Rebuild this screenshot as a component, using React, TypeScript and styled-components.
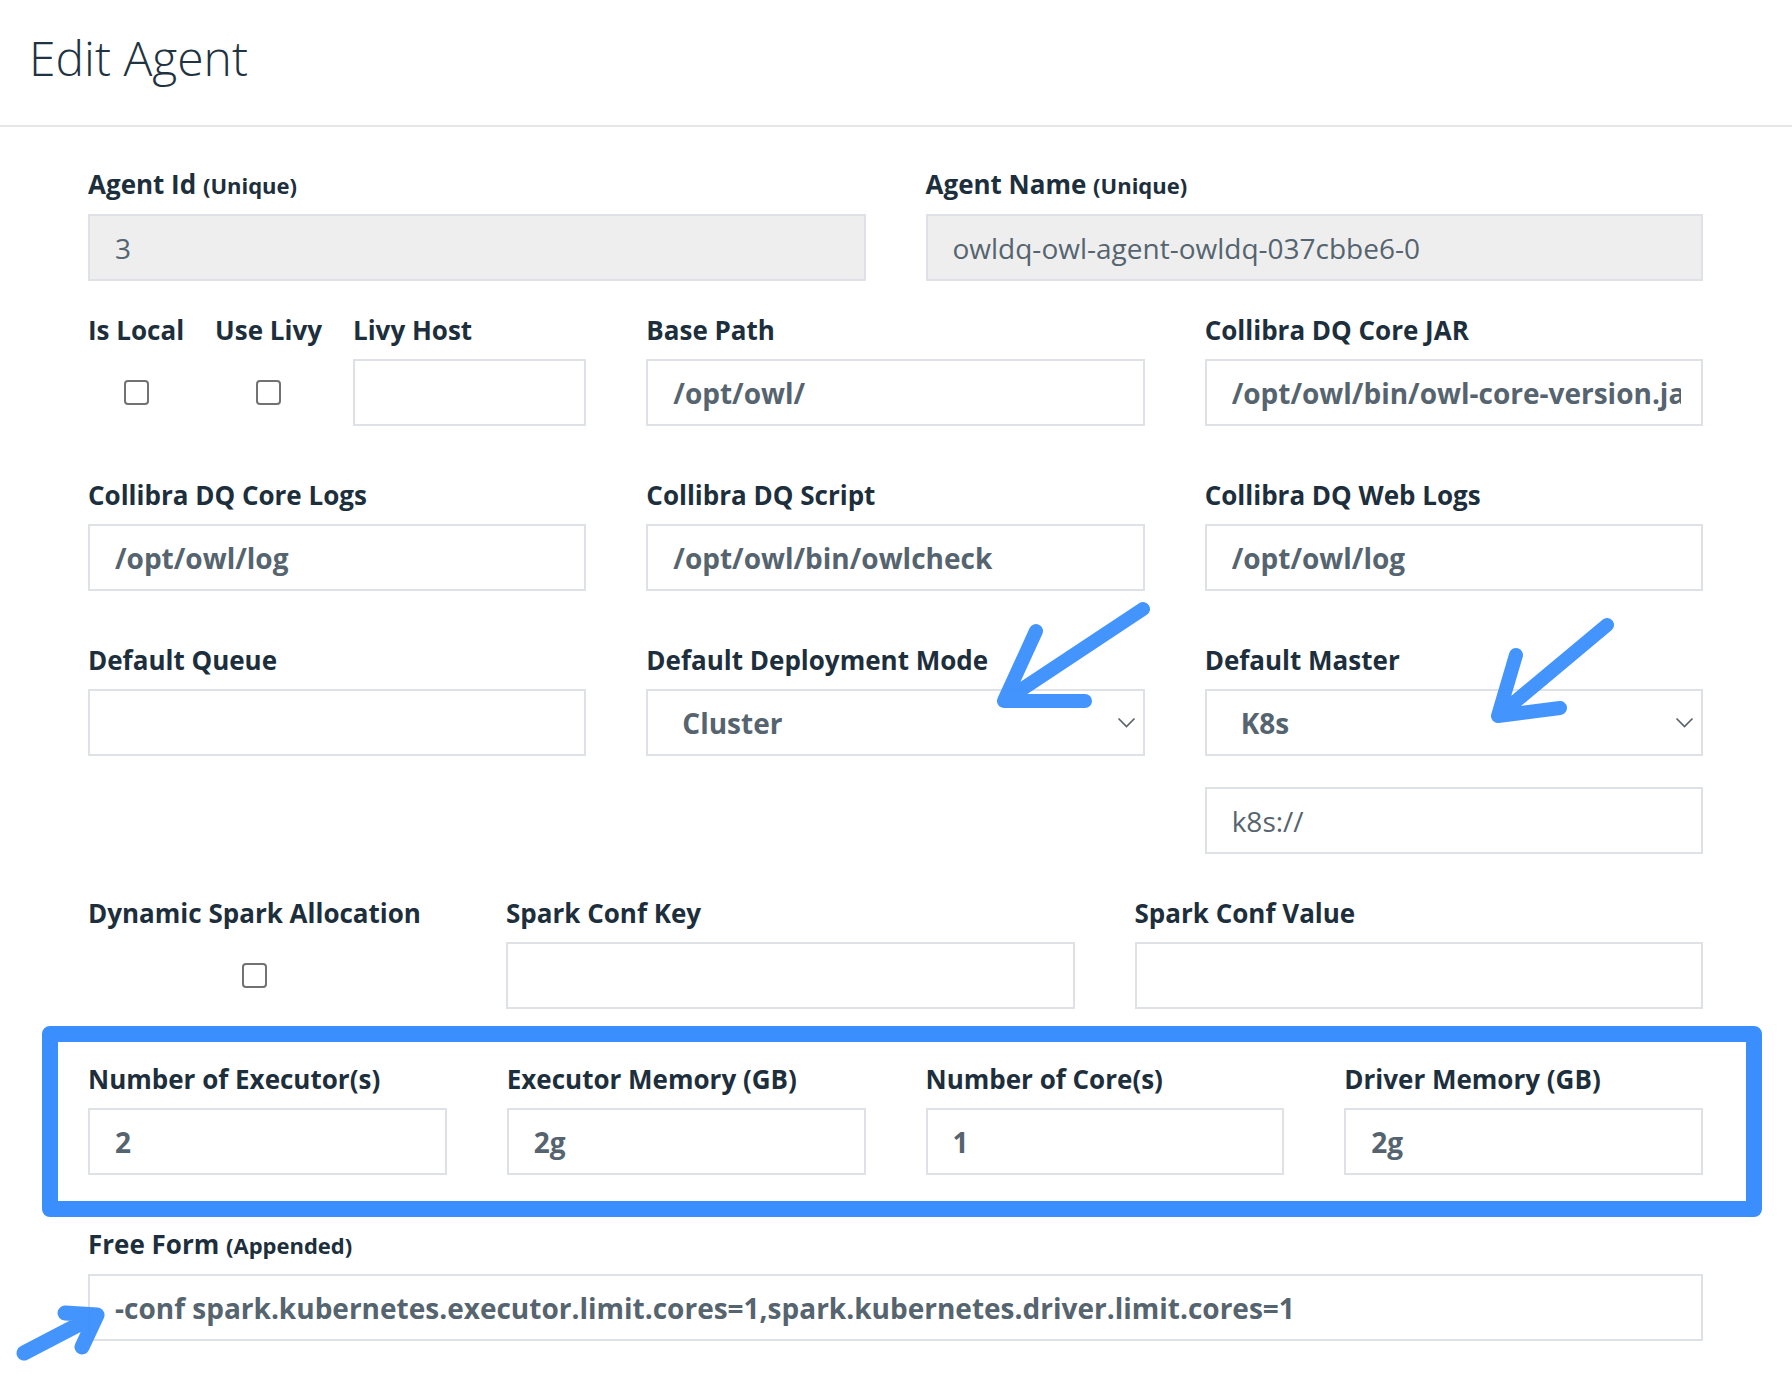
import React from 'react';
import styled, { createGlobalStyle } from 'styled-components';

const GlobalStyle = createGlobalStyle`
  html, body { margin: 0; padding: 0; background: #ffffff; }
  body { font-family: "Open Sans", "Noto Sans", sans-serif; }
  *, *::before, *::after { box-sizing: border-box; }
`;

const Page = styled.div`
  position: relative;
  width: 1792px;
  min-height: 1386px;
  background: #ffffff;
  overflow: hidden;
`;

const Header = styled.header`
  height: 127px;
  padding: 28px 0 0 29px;
  border-bottom: 2px solid #e6e6e6;
`;

const Title = styled.h1`
  margin: 0;
  font-size: 48px;
  line-height: 60px;
  font-weight: 300;
  color: #1f3342;
`;

const Form = styled.div`
  padding: 42px 89px 0 88px;
`;

const Row = styled.div<{ $cols: string; $mb: number }>`
  display: grid;
  grid-template-columns: ${(p) => p.$cols};
  column-gap: 60px;
  align-items: start;
  margin-bottom: ${(p) => p.$mb}px;
`;

const Field = styled.div`
  display: flex;
  flex-direction: column;
  min-width: 0;
  flex: 1;
`;

const Label = styled.label`
  display: block;
  font-size: 26px;
  line-height: 30px;
  font-weight: 700;
  color: #1d2f3c;
  margin-bottom: 14px;
  white-space: nowrap;
`;

const Hint = styled.span`
  font-size: 22px;
  font-weight: 700;
`;

const TextInput = styled.input<{ $light?: boolean }>`
  display: block;
  width: 100%;
  height: 67px;
  margin: 0;
  padding: 0 20px 0 25px;
  border: 2px solid #dee2e6;
  border-radius: 0;
  background: ${(p) => (p.$light ? '#eeeeee' : '#ffffff')};
  font-family: "Open Sans", "Noto Sans", sans-serif;
  font-size: 28px;
  font-weight: 700;
  color: #55646f;
  -webkit-text-fill-color: #55646f;
  opacity: 1;
  outline: none;
`;

const PlainInput = styled(TextInput)`
  font-weight: 400;
`;

const Stack = styled.div`
  display: flex;
  flex-direction: column;
  gap: 31px;
`;

const SelectBox = styled.div`
  display: flex;
  align-items: center;
  justify-content: space-between;
  height: 67px;
  padding: 0 7px 0 34px;
  border: 2px solid #dee2e6;
  background: #ffffff;
  font-size: 28px;
  font-weight: 700;
  color: #55646f;
`;

const Chevron = styled.svg`
  width: 19px;
  height: 11px;
  flex: none;
`;

const CheckRow = styled.div`
  display: flex;
  gap: 31px;
  align-items: flex-start;
`;

const CheckField = styled.div`
  display: flex;
  flex-direction: column;
  align-items: center;
  width: fit-content;
`;

const CheckSlot = styled.div`
  height: 67px;
  display: flex;
  align-items: center;
  justify-content: center;
`;

const Checkbox = styled.input`
  appearance: none;
  -webkit-appearance: none;
  margin: 0;
  width: 25px;
  height: 25px;
  border: 2px solid #727272;
  border-radius: 4px;
  background: #ffffff;
`;

const Highlight = styled.section`
  margin: 0 -59px 12px -46px;
  padding: 22px 43px 26px 30px;
  border: 16px solid #3a8efe;
  border-radius: 8px;
`;

const Overlay = styled.svg`
  position: absolute;
  top: 0;
  left: 0;
  width: 1792px;
  height: 1386px;
  pointer-events: none;
`;

const Arrow: React.FC<{ d: string; w?: number }> = ({ d, w = 14 }) => (
  <path
    d={d}
    fill="none"
    stroke="#3a8efe"
    strokeWidth={w}
    strokeLinecap="round"
    strokeLinejoin="round"
    opacity={0.95}
  />
);

const Select: React.FC<{ value: string }> = ({ value }) => (
  <SelectBox>
    <span>{value}</span>
    <Chevron viewBox="0 0 19 11">
      <polyline points="1.5,1.5 9.5,9.5 17.5,1.5" fill="none" stroke="#59646c" strokeWidth="1.7" />
    </Chevron>
  </SelectBox>
);

const Check: React.FC<{ label: string }> = ({ label }) => (
  <CheckField>
    <Label>{label}</Label>
    <CheckSlot>
      <Checkbox type="checkbox" readOnly />
    </CheckSlot>
  </CheckField>
);

const TextField: React.FC<{ label: React.ReactNode; value?: string; light?: boolean }> = ({
  label,
  value = '',
  light,
}) => (
  <Field>
    <Label>{label}</Label>
    {light ? (
      <PlainInput $light readOnly disabled value={value} />
    ) : (
      <TextInput readOnly value={value} />
    )}
  </Field>
);

export default function App() {
  return (
    <Page>
      <GlobalStyle />
      <Header>
        <Title>Edit Agent</Title>
      </Header>
      <Form>
        <Row $cols="1fr 1fr" $mb={34}>
          <TextField label={<>Agent Id <Hint>(Unique)</Hint></>} value="3" light />
          <TextField
            label={<>Agent Name <Hint>(Unique)</Hint></>}
            value="owldq-owl-agent-owldq-037cbbe6-0"
            light
          />
        </Row>
        <Row $cols="1fr 1fr 1fr" $mb={54}>
          <CheckRow>
            <Check label="Is Local" />
            <Check label="Use Livy" />
            <TextField label="Livy Host" />
          </CheckRow>
          <TextField label="Base Path" value="/opt/owl/" />
          <TextField label="Collibra DQ Core JAR" value="/opt/owl/bin/owl-core-version.jar" />
        </Row>
        <Row $cols="1fr 1fr 1fr" $mb={54}>
          <TextField label="Collibra DQ Core Logs" value="/opt/owl/log" />
          <TextField label="Collibra DQ Script" value="/opt/owl/bin/owlcheck" />
          <TextField label="Collibra DQ Web Logs" value="/opt/owl/log" />
        </Row>
        <Row $cols="1fr 1fr 1fr" $mb={44}>
          <TextField label="Default Queue" />
          <Field>
            <Label>Default Deployment Mode</Label>
            <Select value="Cluster" />
          </Field>
          <Stack>
            <Field>
              <Label>Default Master</Label>
              <Select value="K8s" />
            </Field>
            <PlainInput readOnly value="k8s://" />
          </Stack>
        </Row>
        <Row $cols="358px 1fr 1fr" $mb={17}>
          <Check label="Dynamic Spark Allocation" />
          <TextField label="Spark Conf Key" />
          <TextField label="Spark Conf Value" />
        </Row>
        <Highlight>
          <Row $cols="1fr 1fr 1fr 1fr" $mb={0}>
            <TextField label="Number of Executor(s)" value="2" />
            <TextField label="Executor Memory (GB)" value="2g" />
            <TextField label="Number of Core(s)" value="1" />
            <TextField label="Driver Memory (GB)" value="2g" />
          </Row>
        </Highlight>
        <Row $cols="1fr" $mb={0}>
          <TextField
            label={<>Free Form <Hint>(Appended)</Hint></>}
            value="-conf spark.kubernetes.executor.limit.cores=1,spark.kubernetes.driver.limit.cores=1"
          />
        </Row>
      </Form>
      <Overlay viewBox="0 0 1792 1386">
        <Arrow d="M1143 609 L1004 701 M1036 631 L1004 701 L1085 701" />
        <Arrow d="M1607 625 L1498 716 M1516 655 L1498 716 L1560 708" />
        <Arrow d="M24 1353 L97 1315 M65 1313 L97 1315 L82 1347" w={15} />
      </Overlay>
    </Page>
  );
}
